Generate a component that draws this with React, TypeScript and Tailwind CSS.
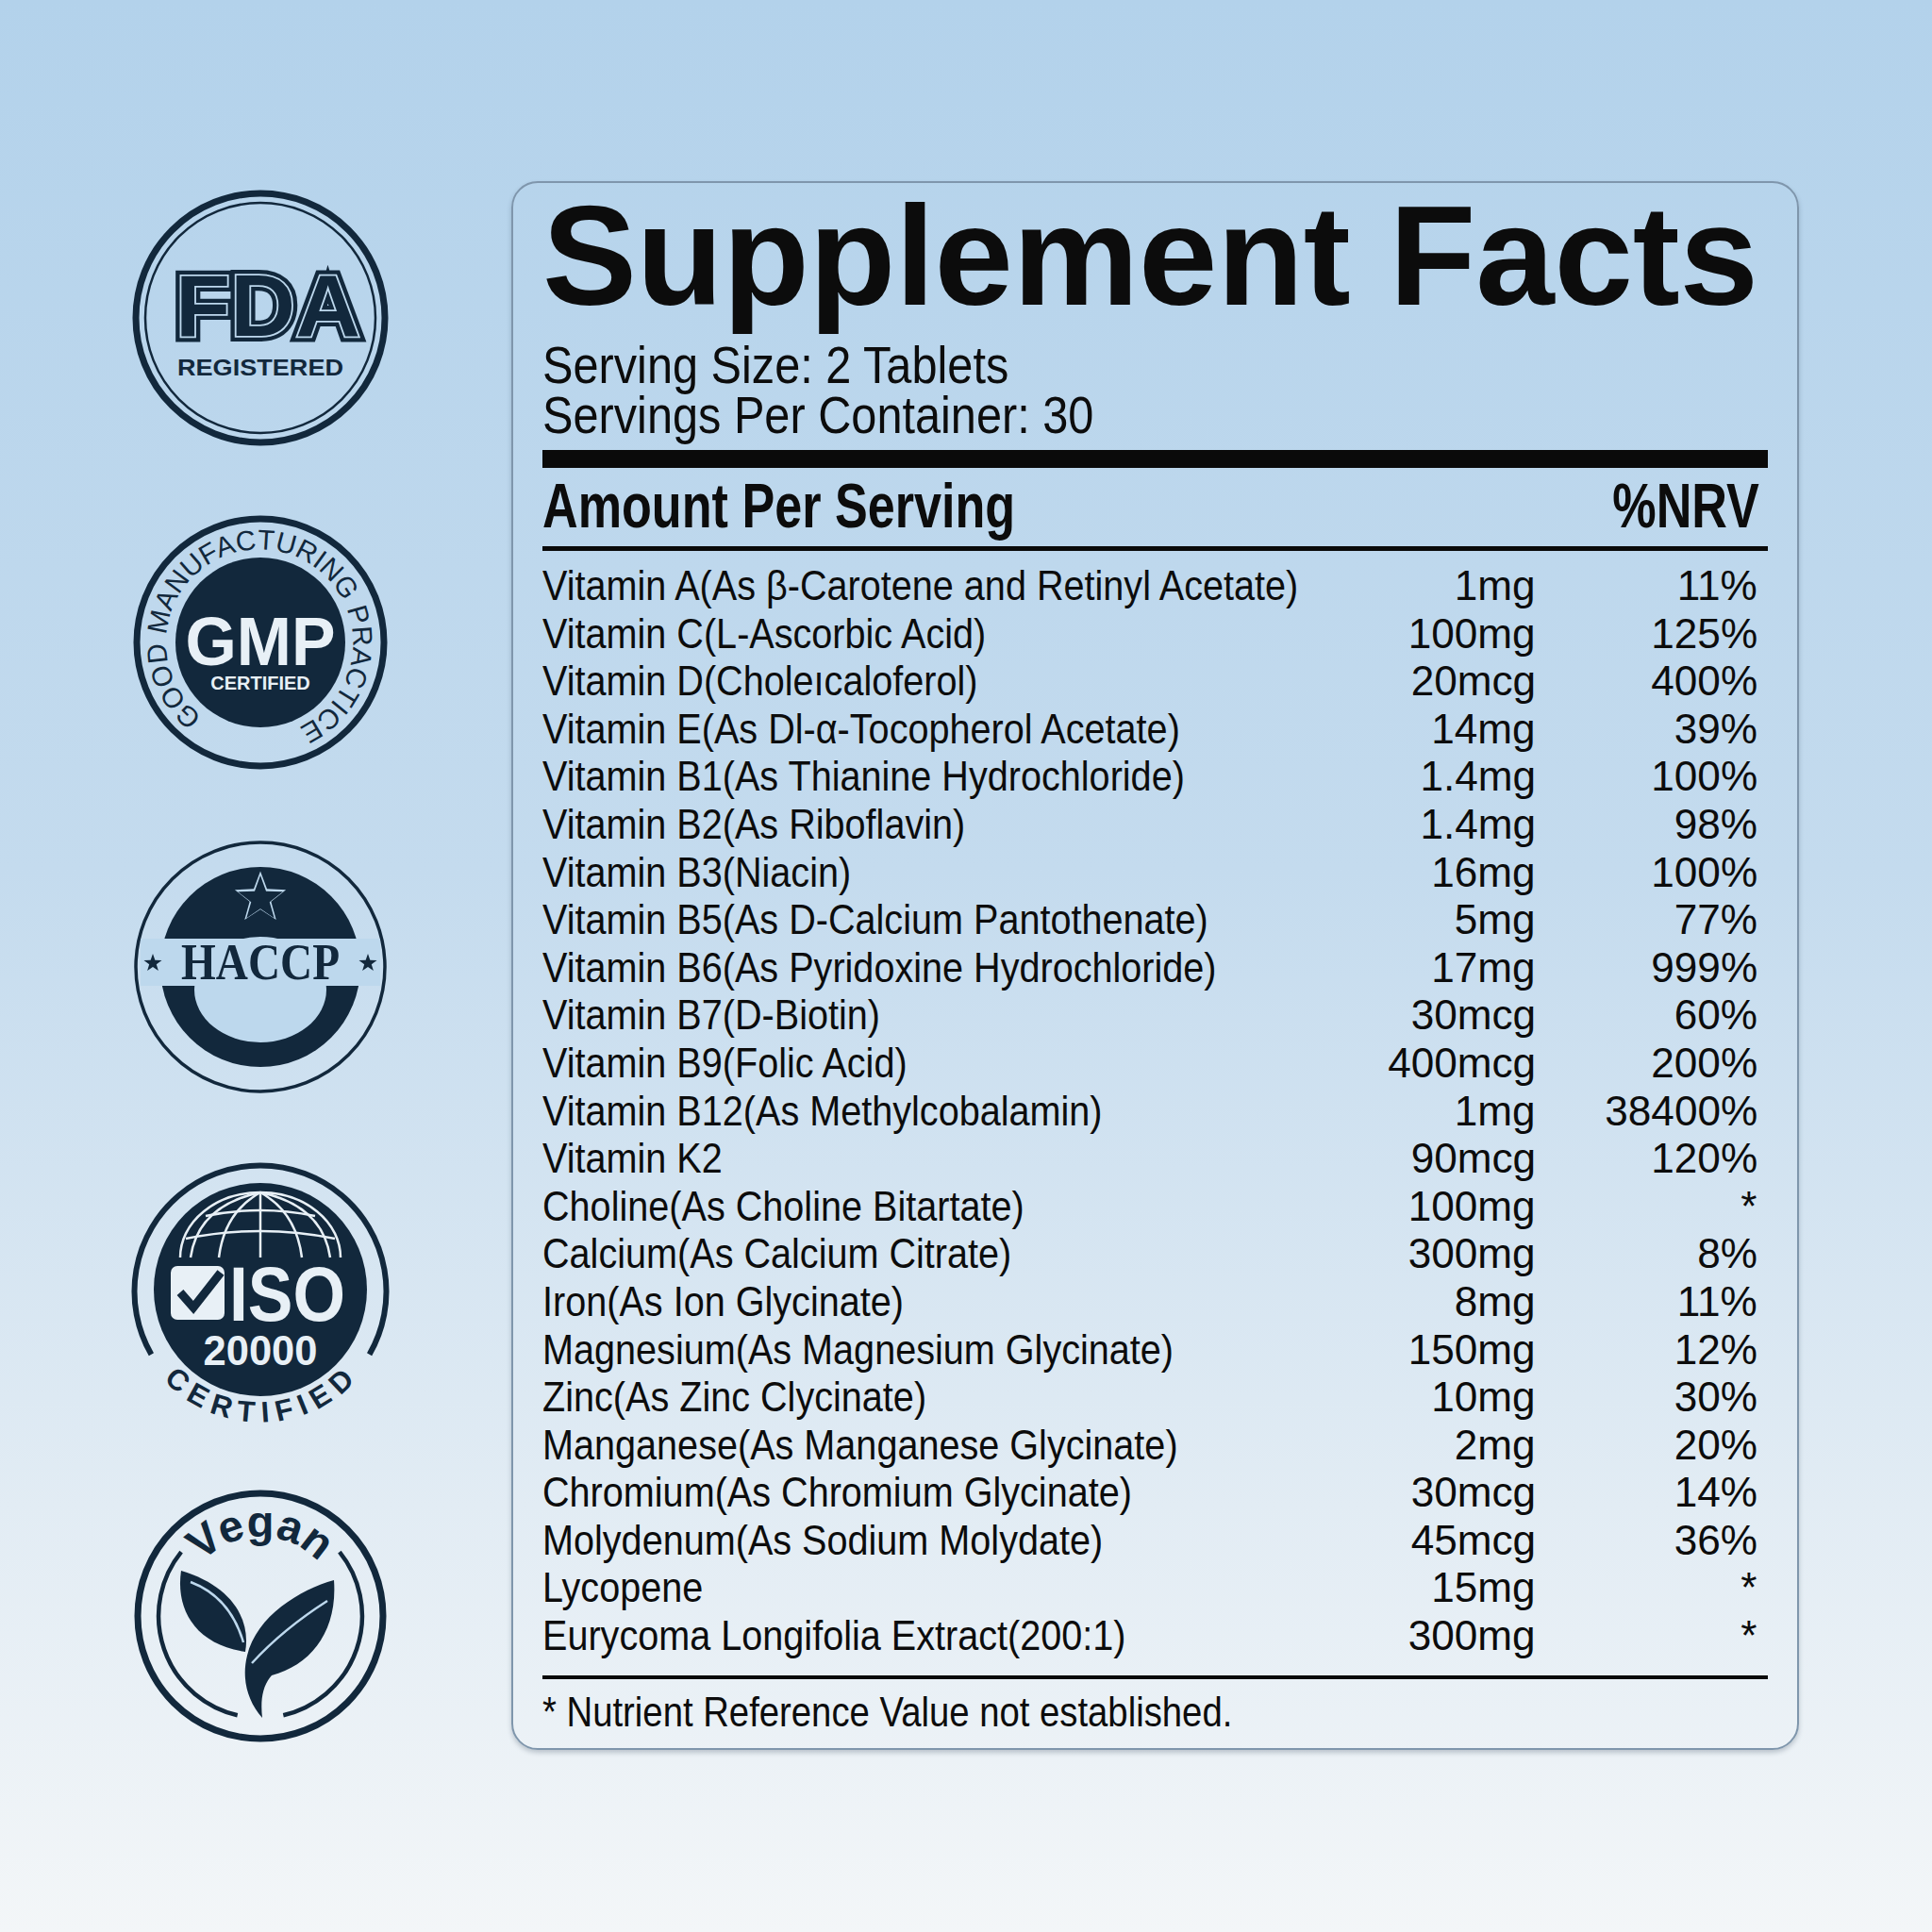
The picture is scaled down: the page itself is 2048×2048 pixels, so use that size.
import React from "react";

const N = "#12283c";
const LIGHT = "#bdd8ed";
const WHITE = "#e8f0f6";
const SANS = "'Liberation Sans', Arial, sans-serif";

function starPoints(cx: number, cy: number, R: number, ratio = 0.4) {
  const r = R * ratio;
  const pts: string[] = [];
  for (let i = 0; i < 10; i++) {
    const a = (-90 + i * 36) * (Math.PI / 180);
    const rad = i % 2 === 0 ? R : r;
    pts.push(`${(cx + rad * Math.cos(a)).toFixed(2)},${(cy + rad * Math.sin(a)).toFixed(2)}`);
  }
  return pts.join(" ");
}

function FdaBadge() {
  const common = {
    x: 46,
    y: 155,
    textLength: 196,
    lengthAdjust: "spacingAndGlyphs" as const,
    fontFamily: SANS,
    fontWeight: 700,
    fontSize: 92,
  };
  return (
    <svg width="272" height="272" viewBox="0 0 272 272">
      <circle cx="136" cy="136" r="132" fill="none" stroke={N} strokeWidth="7" />
      <circle cx="136" cy="136" r="122" fill="none" stroke={N} strokeWidth="2.5" />
      <text {...common} fill={N} stroke={N} strokeWidth="12" strokeLinejoin="miter">FDA</text>
      <text {...common} fill="none" stroke={LIGHT} strokeWidth="3.5" strokeLinejoin="miter">FDA</text>
      <text {...common} fill={N}>FDA</text>
      <text
        x="136"
        y="197"
        textAnchor="middle"
        fontFamily={SANS}
        fontWeight={700}
        fontSize="24"
        textLength="176"
        lengthAdjust="spacingAndGlyphs"
        fill={N}
      >
        REGISTERED
      </text>
    </svg>
  );
}

function GmpBadge() {
  return (
    <svg width="272" height="272" viewBox="0 0 272 272">
      <circle cx="136" cy="136" r="131" fill="none" stroke={N} strokeWidth="7" />
      <circle cx="136" cy="136" r="90" fill={N} />
      <path id="gmpArc" d="M 74.5 214.6 A 99 99 0 1 1 176.3 226.4" fill="none" />
      <text fontFamily={SANS} fontSize="29.5" fill={N}>
        <textPath href="#gmpArc">GOOD MANUFACTURING PRACTICE</textPath>
      </text>
      <text
        x="136"
        y="160"
        textAnchor="middle"
        fontFamily={SANS}
        fontWeight={700}
        fontSize="72"
        textLength="159"
        lengthAdjust="spacingAndGlyphs"
        fill={WHITE}
      >
        GMP
      </text>
      <text x="136" y="186" textAnchor="middle" fontFamily={SANS} fontWeight={700} fontSize="20" fill={WHITE}>
        CERTIFIED
      </text>
    </svg>
  );
}

function HaccpBadge() {
  return (
    <svg width="272" height="272" viewBox="0 0 272 272">
      <circle cx="136" cy="136" r="132" fill="none" stroke={N} strokeWidth="3.5" />
      <circle cx="136" cy="136" r="106" fill={N} />
      <ellipse cx="136" cy="160" rx="70" ry="56" fill={LIGHT} />
      <rect x="9" y="106" width="254" height="50" fill={LIGHT} />
      <polygon points={starPoints(136, 63, 28.5, 0.42)} fill={LIGHT} />
      <polygon points={starPoints(136, 64, 25, 0.41)} fill={N} />
      <polygon points={starPoints(22, 132, 10)} fill={N} />
      <polygon points={starPoints(250, 132, 10)} fill={N} />
      <text
        x="136"
        y="149"
        textAnchor="middle"
        fontFamily="'Liberation Serif', 'Times New Roman', serif"
        fontWeight={700}
        fontSize="54"
        textLength="168"
        lengthAdjust="spacingAndGlyphs"
        fill={N}
      >
        HACCP
      </text>
    </svg>
  );
}

function IsoBadge() {
  return (
    <svg width="272" height="272" viewBox="0 0 272 272" overflow="visible">
      <path d="M 20.4 202.75 A 133.5 133.5 0 1 1 251.6 202.75" fill="none" stroke={N} strokeWidth="6" />
      <circle cx="136" cy="134" r="113" fill={N} />
      <g fill="none" stroke={WHITE} strokeWidth="2.5">
        <path d="M 51 100 A 85 69 0 0 1 221 100" />
        <path d="M 136 31 L 136 100" />
        <path d="M 136 31 Q 98 52 92 100" />
        <path d="M 136 31 Q 174 52 180 100" />
        <path d="M 136 31 Q 70 45 62 100" />
        <path d="M 136 31 Q 202 45 210 100" />
        <path d="M 78 56 Q 136 44 194 56" />
        <path d="M 57 80 Q 136 64 215 80" />
      </g>
      <rect x="41" y="109" width="57" height="57" rx="7" fill={WHITE} />
      <path d="M 51 137 L 65 153 L 94 116" fill="none" stroke={N} strokeWidth="9" strokeLinejoin="miter" />
      <text
        x="103"
        y="167"
        fontFamily={SANS}
        fontWeight={700}
        fontSize="82"
        textLength="123"
        lengthAdjust="spacingAndGlyphs"
        fill={WHITE}
      >
        ISO
      </text>
      <text
        x="136"
        y="214"
        textAnchor="middle"
        fontFamily={SANS}
        fontWeight={700}
        fontSize="45"
        textLength="121"
        lengthAdjust="spacingAndGlyphs"
        fill={WHITE}
      >
        20000
      </text>
      <path id="isoArc" d="M 15.8 205.4 A 139 139 0 0 0 256.2 205.4" fill="none" />
      <text fontFamily={SANS} fontWeight={700} fontSize="31" fill={N} letterSpacing="8">
        <textPath href="#isoArc" startOffset="51%" textAnchor="middle">
          CERTIFIED
        </textPath>
      </text>
    </svg>
  );
}

function VeganBadge() {
  return (
    <svg width="272" height="272" viewBox="0 0 272 272">
      <circle cx="136" cy="136" r="130" fill="none" stroke={N} strokeWidth="7" />
      <path d="M 52.1 68.1 A 108 108 0 0 0 111.7 241.2" fill="none" stroke={N} strokeWidth="4.5" />
      <path d="M 160.3 241.2 A 108 108 0 0 0 219.9 68.1" fill="none" stroke={N} strokeWidth="4.5" />
      <path id="veganArc" d="M 63.3 94 A 84 84 0 0 1 208.7 94" fill="none" />
      <text fontFamily={SANS} fontWeight={700} fontSize="47" fill={N}>
        <textPath href="#veganArc" startOffset="50%" textAnchor="middle">
          Vegan
        </textPath>
      </text>
      <path d="M52 88 C 46 128, 66 166, 120 174 C 126 140, 106 104, 52 88 Z" fill={N} />
      <path d="M 62 100 Q 104 116 118 164" fill="none" stroke={LIGHT} strokeWidth="2.5" />
      <path
        d="M214 98 C 178 108, 132 136, 122 178 C 116 202, 122 226, 138 244 C 136 226, 138 210, 148 199 C 190 188, 218 152, 214 98 Z"
        fill={N}
      />
      <path d="M 127 186 Q 160 150 207 120" fill="none" stroke={LIGHT} strokeWidth="2.5" />
    </svg>
  );
}

const rows: [string, string, string][] = [
  ["Vitamin A(As β-Carotene and Retinyl Acetate)", "1mg", "11%"],
  ["Vitamin C(L-Ascorbic Acid)", "100mg", "125%"],
  ["Vitamin D(Choleıcaloferol)", "20mcg", "400%"],
  ["Vitamin E(As Dl-α-Tocopherol Acetate)", "14mg", "39%"],
  ["Vitamin B1(As Thianine Hydrochloride)", "1.4mg", "100%"],
  ["Vitamin B2(As Riboflavin)", "1.4mg", "98%"],
  ["Vitamin B3(Niacin)", "16mg", "100%"],
  ["Vitamin B5(As D-Calcium Pantothenate)", "5mg", "77%"],
  ["Vitamin B6(As Pyridoxine Hydrochloride)", "17mg", "999%"],
  ["Vitamin B7(D-Biotin)", "30mcg", "60%"],
  ["Vitamin B9(Folic Acid)", "400mcg", "200%"],
  ["Vitamin B12(As Methylcobalamin)", "1mg", "38400%"],
  ["Vitamin K2", "90mcg", "120%"],
  ["Choline(As Choline Bitartate)", "100mg", "*"],
  ["Calcium(As Calcium Citrate)", "300mg", "8%"],
  ["Iron(As Ion Glycinate)", "8mg", "11%"],
  ["Magnesium(As Magnesium Glycinate)", "150mg", "12%"],
  ["Zinc(As Zinc Clycinate)", "10mg", "30%"],
  ["Manganese(As Manganese Glycinate)", "2mg", "20%"],
  ["Chromium(As Chromium Glycinate)", "30mcg", "14%"],
  ["Molydenum(As Sodium Molydate)", "45mcg", "36%"],
  ["Lycopene", "15mg", "*"],
  ["Eurycoma Longifolia Extract(200:1)", "300mg", "*"],
];

export default function App() {
  return (
    <div className="w-[2048px] h-[2048px] flex items-start bg-[linear-gradient(180deg,#b3d2eb_0%,#c4dbee_45%,#e2ecf4_78%,#f3f6f8_100%)] font-['Liberation_Sans',Arial,sans-serif] text-[#0c0c0c]">
      <div className="ml-[140px] mt-[201px] flex flex-col gap-[72px]">
        <FdaBadge />
        <GmpBadge />
        <HaccpBadge />
        <IsoBadge />
        <VeganBadge />
      </div>

      <div className="ml-[130px] mt-[192px] w-[1365px] rounded-[28px] border-2 border-[#7f96ac] px-[31px] pt-[2px] pb-[13px] shadow-[0_3px_5px_rgba(40,60,80,0.25)]">
        <h1 className="text-[150px] leading-[150px] font-bold whitespace-nowrap tracking-[-0.2px]">Supplement Facts</h1>

        <div className="mt-[15px] text-[55px] leading-[53px] whitespace-nowrap">
          <div>
            <span className="inline-block origin-left scale-x-[0.885]">Serving Size: 2 Tablets</span>
          </div>
          <div>
            <span className="inline-block origin-left scale-x-[0.885]">Servings Per Container: 30</span>
          </div>
        </div>

        <div className="mt-[10px] h-[19px] bg-[#0a0a0a]" />

        <div className="mt-[5px] flex justify-between pr-[9px] text-[66px] leading-[70px] font-bold whitespace-nowrap">
          <span className="inline-block origin-left scale-x-[0.79]">Amount Per Serving</span>
          <span className="inline-block origin-right scale-x-[0.79]">%NRV</span>
        </div>

        <div className="mt-[8px] h-[5px] bg-[#0a0a0a]" />

        <div className="mt-[12px] flex flex-col text-[45px] leading-[50.6px] whitespace-nowrap">
          {rows.map(([name, amt, nrv]) => (
            <div key={name} className="flex h-[50.6px] pr-[11px]">
              <div className="flex-1 min-w-0">
                <span className="inline-block origin-left scale-x-[0.88]">{name}</span>
              </div>
              <div className="w-[200px] shrink-0 text-right">
                <span className="inline-block origin-right scale-x-[0.98]">{amt}</span>
              </div>
              <div className="w-[235px] shrink-0 text-right">
                <span className="inline-block origin-right scale-x-[0.98]">{nrv}</span>
              </div>
            </div>
          ))}
        </div>

        <div className="mt-[16px] h-[4px] bg-[#0a0a0a]" />

        <div className="mt-[10px] text-[44px] leading-[50px] whitespace-nowrap">
          <span className="inline-block origin-left scale-x-[0.87]">* Nutrient Reference Value not established.</span>
        </div>
      </div>
    </div>
  );
}
